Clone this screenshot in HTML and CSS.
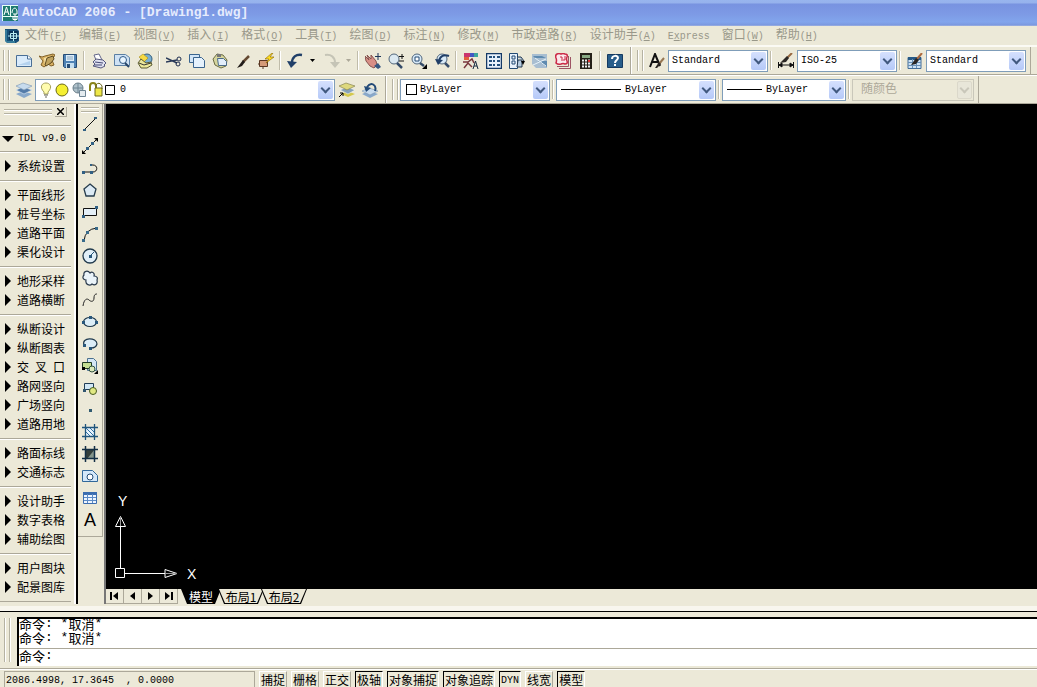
FILE: index.html
```
<!DOCTYPE html>
<html lang="zh-CN">
<head>
<meta charset="utf-8">
<title>AutoCAD 2006 - [Drawing1.dwg]</title>
<link rel="stylesheet" href="styles.css">
</head>
<body>
<div class="app">
<header class="title">
  <svg class="ico" viewBox="0 0 16 16"><path d="M0 0h16v16H0z" fill="#1d7a70"/><path d="M0 .5h16M8.500 0v11M0 11.500h16M.5 0v16" stroke="#e8fff8" fill="none"/><path d="M2 10l2.500-8L7 10M3 7h3M10 8c0-5 4-7 5-2v3h-4M11 11.500h4v3h-4zM13 9v7" stroke="#fff" fill="none"/></svg>
  <h1>AutoCAD 2006 - [Drawing1.dwg]</h1>
</header>
<nav class="menu">
  <svg class="ico" viewBox="0 0 16 16"><path d="M1 1h12l2 2v10l-3 2H3l-2-2z" fill="#174f78"/><path d="M5 3h9v9H5z" fill="#0b3557"/><path d="M9.500 3v10M4 8h11M6.500 5.500h6v5h-6z" stroke="#b9eef2" fill="none"/><path d="M2 2v12M3 14h8" stroke="#58a9bd"/></svg>
  <button>文件<i>(<u>F</u>)</i></button><button>编辑<i>(<u>E</u>)</i></button><button>视图<i>(<u>V</u>)</i></button><button>插入<i>(<u>I</u>)</i></button><button>格式<i>(<u>O</u>)</i></button><button>工具<i>(<u>T</u>)</i></button><button>绘图<i>(<u>D</u>)</i></button><button>标注<i>(<u>N</u>)</i></button><button>修改<i>(<u>M</u>)</i></button><button>市政道路<i>(<u>R</u>)</i></button><button>设计助手<i>(<u>A</u>)</i></button><button><i>E<u>x</u>press</i></button><button>窗口<i>(<u>W</u>)</i></button><button>帮助<i>(<u>H</u>)</i></button>
</nav>
<div class="row">
  <div class="bar">
    <span class="grip"></span>
    <button class="tool" aria-label="新建"><svg viewBox="0 0 16 16"><path d="M.5 2.500h11l4 3v8H.5z" fill="#d9ebfb" stroke="#4a6f96"/><path d="M11.500 2.500v3.500h4" fill="#fff" stroke="#4a6f96"/><path d="M2 12h12V8z" fill="#b4d2ee"/></svg></button>
    <button class="tool" aria-label="打开"><svg viewBox="0 0 16 16"><path d="M0 3l3 1 3-1 8-2 2 1-3 5 2 5-3 1-3-2-4 3-3-2 2-4z" fill="#d9b264" stroke="#806028"/><path d="M5 5l7-2-1 7-5 3z" fill="#f5e1a5"/><path d="M6 12l2-7 6-2 1 3-3 4-5 3z" fill="#c0a35e" stroke="#5e4a20"/></svg></button>
    <button class="tool" aria-label="保存"><svg viewBox="0 0 16 16"><path d="M1.500 1.500h13v13h-12l-1-1z" fill="#4f83b5" stroke="#264c75"/><path d="M4 2h8v6H4z" fill="#dcecf8"/><path d="M5 4h6M5 6h6" stroke="#8aa7bf"/><path d="M4 10h8v5H4z" fill="#c5dff0"/><path d="M5 11h3v4H5z" fill="#264c75"/></svg></button>
    <span class="sep"></span>
    <button class="tool" aria-label="打印"><svg viewBox="0 0 16 16"><path d="M5 7L3 2l5-1 3 6" fill="#fff" stroke="#64678a"/><path d="M2 9l3-3 7 1 3 3-2 2 1 1-4 2-8-2 2-2z" fill="#dfe1f0" stroke="#55587d"/><path d="M4 9l8 1M3 12h8" stroke="#454874"/></svg></button>
    <button class="tool" aria-label="打印预览"><svg viewBox="0 0 16 16"><path d="M.5 1.500h11l4 3v8H.5z" fill="#cfe2f4" stroke="#5b7fa3"/><circle cx="9" cy="7" r="3.500" fill="#e8f5ff" stroke="#315b88"/><path d="M11 10l4 4" stroke="#254468" stroke-width="2"/></svg></button>
    <button class="tool" aria-label="发布"><svg viewBox="0 0 16 16"><circle cx="10" cy="6" r="5" fill="#79aed0" stroke="#355f7e"/><path d="M2 4l4-3 5 4-4 4z" fill="#f7da43" stroke="#a28c22" stroke-width=".6"/><path d="M1 10l3-4 5 4 5-1 1 3-5 3-6 0z" fill="#ece89a" stroke="#5b5b34"/><path d="M2 10l5 2 7-2" stroke="#333" fill="none"/></svg></button>
    <span class="sep"></span>
    <button class="tool" aria-label="剪切"><svg viewBox="0 0 16 16"><path d="M0 5l11 5M0 9l11-2" stroke="#2a3a58" stroke-width="1.400"/><circle cx="13" cy="6" r="2" fill="none" stroke="#1d2c4e"/><circle cx="12" cy="11" r="2" fill="none" stroke="#1d2c4e"/></svg></button>
    <button class="tool" aria-label="复制"><svg viewBox="0 0 16 16"><path d="M.5 1.500h10v8H.5z" fill="#d2e5f7" stroke="#3a648e"/><path d="M4.500 4.500h8l3 3v7h-11z" fill="#e5f1fc" stroke="#3a648e"/></svg></button>
    <button class="tool" aria-label="粘贴"><svg viewBox="0 0 16 16"><path d="M1 6l4-5 6 1 4 5-1 6-5 2-6-3z" fill="#d6d59d" stroke="#6b6c44"/><path d="M5 1h4v3H5z" fill="#777"/><path d="M5.500 5.500h6l3 3v4h-8z" fill="#e2eefb" stroke="#4b6b88"/></svg></button>
    <button class="tool" aria-label="特性匹配"><svg viewBox="0 0 16 16"><path d="M14 3L8 9" stroke="#654a32" stroke-width="2.500"/><path d="M8 7l2 2-3 4-5 2z" fill="#221d1a"/></svg></button>
    <button class="tool" aria-label="块编辑器"><svg viewBox="0 0 16 16"><path d="M1.500 7.500h8v6h-8z" fill="#d49a78" stroke="#593622"/><path d="M14 0L7 6h4l-3 4 8-6h-4l3-4z" fill="#ffdf20" stroke="#876000" stroke-width=".6"/><path d="M5 13v3M0 11h2" stroke="#593622"/></svg></button>
    <span class="sep"></span>
    <button class="tool" aria-label="放弃"><svg viewBox="0 0 16 16"><path d="M15 2C9 1 5 4 5 10" fill="none" stroke="#203f68" stroke-width="2.500"/><path d="M0 8l10 1-6 6z" fill="#203f68"/></svg></button>
    <button class="mini" aria-label="放弃列表"><svg viewBox="0 0 6 4"><path d="M0 0h5L2.500 3z"/></svg></button>
    <button class="tool" aria-label="重做"><svg viewBox="0 0 16 16"><path d="M1 2c6-1 10 2 10 8" fill="none" stroke="#c5c4b6" stroke-width="2"/><path d="M6 9h10l-5 6z" fill="#c5c4b6"/></svg></button>
    <button class="mini pale" aria-label="重做列表"><svg viewBox="0 0 6 4"><path d="M0 0h5L2.500 3z"/></svg></button>
    <span class="sep"></span>
    <button class="tool" aria-label="平移"><svg viewBox="0 0 16 16"><path d="M0 3l4 4-2-5 4 4V2l5 6 1 4-3 3-4-2-4-5z" fill="#d88f86" stroke="#86544f"/><path d="M13 0v7M10 3.500h6" stroke="#1d3558"/><path d="M9 13l4-3 3 4-3 2z" fill="#365780"/></svg></button>
    <button class="tool" aria-label="实时缩放"><svg viewBox="0 0 16 16"><circle cx="6" cy="6" r="5" fill="#dce9f1" stroke="#52677c"/><path d="M9 10l5 5" stroke="#354c6a" stroke-width="2.500"/><path d="M14 1v5M11 3.500h5M11 8h5" stroke="#111"/></svg></button>
    <button class="tool" aria-label="窗口缩放"><svg viewBox="0 0 16 16"><circle cx="6" cy="6" r="5" fill="#d8eaf8" stroke="#52677c"/><path d="M4 4h4v4H4z" fill="#fff" stroke="#244a73"/><path d="M9 10l4 3" stroke="#354c6a" stroke-width="2.500"/><path d="M16 11v5h-5z"/></svg></button>
    <button class="tool" aria-label="缩放上一个"><svg viewBox="0 0 16 16"><circle cx="8" cy="6" r="5" fill="#d8eaf8" stroke="#52677c"/><path d="M15 3C10 1 6 3 5 8" fill="none" stroke="#203f68" stroke-width="2"/><path d="M1 6l8 1-5 5z" fill="#203f68"/><path d="M11 10l4 4" stroke="#354c6a" stroke-width="2.500"/></svg></button>
    <span class="sep"></span>
    <button class="tool" aria-label="特性"><svg viewBox="0 0 16 16"><path d="M1 0h6v4H1z" fill="#ca356f"/><path d="M7 0h4v4H7z" fill="#4357c4"/><path d="M11 0h4v4h-4z" fill="#3ba69c"/><path d="M1 4h5v3H1z" fill="#e35f3c"/><path d="M0 9h5l4-3 2 4M1 15l4-5 4 4" stroke="#78363c" stroke-width="1.500" fill="none"/><path d="M10 16l2.500-8L15 16M11 13h3" stroke="#14283e" fill="none"/></svg></button>
    <button class="tool" aria-label="设计中心"><svg viewBox="0 0 16 16"><path d="M.5 .5h15v15H.5z" fill="#e7f1fb" stroke="#153a66" stroke-width="1.500"/><path d="M3 4h3M3 8h3M3 12h3M7 4h2M7 8h2M7 12h2M11 4h3M11 8h3M11 12h3" stroke="#24507d" stroke-width="2"/></svg></button>
    <button class="tool" aria-label="工具选项板"><svg viewBox="0 0 16 16"><path d="M.5 .5h8v15h-8z" fill="#e7f1fb" stroke="#234a74"/><path d="M3 3h3v3H3zM3 8h3v3H3z" stroke="#234a74" fill="none"/><path d="M8 4h4l3 4M9 7h4v7H8z" fill="#b6cde2" stroke="#24384f"/><path d="M12 8h4l-2 4z"/></svg></button>
    <button class="tool" aria-label="图纸集"><svg viewBox="0 0 16 16"><path d="M0 1h15v14H4L0 11z" fill="#a8bed1"/><path d="M1 3h9l4 2H3zM6 8h9v6z" fill="#5f8bb0"/><path d="M1 12l13-6M3 5l11 8" stroke="#e8f3f9"/></svg></button>
    <button class="tool" aria-label="标记集"><svg viewBox="0 0 16 16"><path d="M15.500 4v11.500H4M13.500 3v10.500H2" fill="none" stroke="#9e5464"/><path d="M2 1q2-1 4 0 2-1 4 0 3 0 2 3-1 2 0 4 1 3-2 3-2-1-4 0-3 1-5-1 1-3 0-5-1-3 1-4z" fill="#fbe9ec" stroke="#cb2947" stroke-width="1.500"/><path d="M5 4h2v4M10 3v4H8" stroke="#cb2947" fill="none"/></svg></button>
    <button class="tool" aria-label="计算器"><svg viewBox="0 0 16 16"><path d="M2 0h12v16H2z" fill="#252018"/><path d="M4 2h8v3H4z" fill="#88a983"/><path d="M4 7.500h8M4 10.500h8M4 13.500h8" stroke="#eee" stroke-width="2" stroke-dasharray="2 1"/><path d="M10 7h2v2h-2z" fill="#d33"/></svg></button>
    <span class="sep"></span>
    <button class="tool" aria-label="帮助"><svg viewBox="0 0 16 16"><path d="M.5 1.500h15v13H.5z" fill="#285d8a" stroke="#153a61"/><path d="M5 6c0-4 6-4 6-1 0 2-3 2-3 5" fill="none" stroke="#fff" stroke-width="2"/><path d="M7 11h2v2H7z" fill="#fff"/></svg></button>
  </div>
  <div class="bar">
    <span class="grip"></span>
    <button class="tool" aria-label="文字样式"><svg viewBox="0 0 16 16"><path d="M1 14L6 1l5 12M3 9h6" fill="none" stroke="#111" stroke-width="2"/><path d="M15 5l-5 6" stroke="#967652" stroke-width="2"/><path d="M10 9l2 2-4 4-2 0z" fill="#292522"/></svg></button>
    <label class="combo w100"><select aria-label="文字样式"><option>Standard</option></select></label>
    <span class="sep"></span>
    <button class="tool" aria-label="标注样式"><svg viewBox="0 0 16 16"><path d="M.5 9v6M15.500 9v6M1 12h14M1 12l3-2v4zM15 12l-3-2v4z" stroke="#111"/><path d="M14 0L9 5" stroke="#986840" stroke-width="2"/><path d="M9 3l2 2-3 4-6 1z" fill="#2b2724"/></svg></button>
    <label class="combo w100"><select aria-label="标注样式"><option>ISO-25</option></select></label>
    <span class="sep"></span>
    <button class="tool" aria-label="表格样式"><svg viewBox="0 0 16 16"><path d="M1 4.500h13v11H1z" fill="#cce1f4" stroke="#426d98"/><path d="M1 5.500h13" stroke="#275986" stroke-width="3"/><path d="M1 9.500h13M1 12.500h13M5.500 6v9M9.500 6v9" stroke="#6890b7"/><path d="M15 0l-5 6" stroke="#ad6a40" stroke-width="2"/><path d="M9 5l3 2-3 4-5 1z" fill="#292522"/></svg></button>
    <label class="combo w100"><select aria-label="表格样式"><option>Standard</option></select></label>
  </div>
</div>
<div class="row second">
  <div class="bar">
    <span class="grip"></span>
    <button class="tool" aria-label="图层特性"><svg viewBox="0 0 16 16"><path d="M0 12l7-3 9 3-8 4z" fill="#89a9cb"/><path d="M0 8l7-3 9 3-8 4z" fill="#547ca9" stroke="#e3eef8" stroke-width=".6"/><path d="M0 4l7-3 9 3-8 4z" fill="#c7dbed" stroke="#7895b4" stroke-width=".6"/></svg></button>
    <label class="combo layers">
      <svg class="state" viewBox="0 0 76 16"><path d="M5 10C0 5 3 1 7 1s7 4 2 9v2H5z" fill="#fffcae" stroke="#a5a15b"/><path d="M5 13h4M6 15h2" stroke="#66665a"/><circle cx="23" cy="8" r="6" fill="#f5ef31" stroke="#6c6a14"/><circle cx="39" cy="6" r="5" fill="#afc1ca" stroke="#6a7e89"/><path d="M39 1v10M34 6h10M40.500 8.500h6v6h-6z" fill="#e4ebef" stroke="#6f8594"/><path d="M51 9V4q0-3 3-3t3 3v4" fill="none" stroke="#8b8419" stroke-width="2"/><path d="M56 6h7v8h-7z" fill="#eee747" stroke="#6d681e"/><path d="M57 6V3q3-4 6 1v3" fill="none" stroke="#6d681e"/><path d="M66.500 3.500h9v9h-9z" fill="#fff" stroke="#000"/></svg>
      <select aria-label="图层"><option>0</option></select>
    </label>
    <button class="tool" aria-label="将对象的图层置为当前"><svg viewBox="0 0 16 16"><path d="M2 12l6-3 8 3-7 3z" fill="#d4c94c"/><path d="M1 8l7-3 8 3-7 4z" fill="#86a2ba" stroke="#fff" stroke-width=".5"/><path d="M0 4l7-3 9 3-8 4z" fill="#ddd87d" stroke="#787746" stroke-width=".6"/><path d="M0 15l4-4M1 11h3v3" stroke="#000" fill="none"/></svg></button>
    <button class="tool" aria-label="上一个图层"><svg viewBox="0 0 16 16"><path d="M0 12l7-3 9 3-8 4z" fill="#89a9cb"/><path d="M0 9l7-3 9 3-8 4z" fill="#c8dcef" stroke="#7895b4" stroke-width=".6"/><path d="M13 9c2-6-4-10-8-4" fill="none" stroke="#234a77" stroke-width="2"/><path d="M2 4l7 2-5 4z" fill="#234a77"/></svg></button>
  </div>
  <div class="bar">
    <span class="grip"></span>
    <label class="combo w150"><span class="swatch"></span><select aria-label="颜色"><option>ByLayer</option></select></label>
    <span class="sep"></span>
    <label class="combo w160"><span class="line"></span><select aria-label="线型"><option>ByLayer</option></select></label>
    <span class="sep"></span>
    <label class="combo w124"><span class="line short"></span><select aria-label="线宽"><option>ByLayer</option></select></label>
    <span class="sep"></span>
    <label class="combo w120 off"><select aria-label="打印样式" disabled><option>随颜色</option></select></label>
  </div>
</div>
<main class="work">
  <aside class="side">
    <div class="side-top"><span class="hgrip"></span><button class="close" aria-label="关闭"><svg viewBox="0 0 7 7"><path d="M0 0l7 7M7 0L0 7" stroke="#000" stroke-width="1.500"/></svg></button></div>
    <div class="group head"><button class="open"><i>TDL v9.0</i></button></div>
    <div class="group"><button>系统设置</button></div>
    <div class="group"><button>平面线形</button><button>桩号坐标</button><button>道路平面</button><button>渠化设计</button></div>
    <div class="group"><button>地形采样</button><button>道路横断</button></div>
    <div class="group"><button>纵断设计</button><button>纵断图表</button><button class="spread"><span>交</span><span>叉</span><span>口</span></button><button>路网竖向</button><button>广场竖向</button><button>道路用地</button></div>
    <div class="group"><button>路面标线</button><button>交通标志</button></div>
    <div class="group"><button>设计助手</button><button>数字表格</button><button>辅助绘图</button></div>
    <div class="group"><button>用户图块</button><button>配景图库</button></div>
  </aside>
  <div class="dock">
    <div class="draw">
      <span class="hgrip"></span>
      <button aria-label="直线"><svg viewBox="0 0 16 16"><path d="M2 14L14 2" stroke="#111"/><path d="M1 13h3v2H1zM12 1h3v2h-3z" fill="#316084"/></svg></button>
      <button aria-label="构造线"><svg viewBox="0 0 16 16"><path d="M1 15L15 1" stroke="#111"/><path d="M0 16v-4l4 4zM16 0v4l-4-4z"/><path d="M4 9h3v3H4zM9 4h3v3H9z" fill="#316084"/></svg></button>
      <button aria-label="多段线"><svg viewBox="0 0 16 16"><path d="M2 12h9c5 0 5-7 0-7H8" fill="none" stroke="#111"/><path d="M0 11h3v3H0zM8 11h3v3H8zM8 4h2v2H8z" fill="#316084"/></svg></button>
      <button aria-label="正多边形"><svg viewBox="0 0 16 16"><path d="M8 2l6 5-2 7H4L2 7z" fill="#dceaf4" stroke="#263c4d" stroke-width="1.300"/></svg></button>
      <button aria-label="矩形"><svg viewBox="0 0 16 16"><path d="M1.500 4.500h13v7h-13z" fill="#e5f0f8" stroke="#111"/><path d="M0 11h3v3H0zM13 2h3v3h-3z" fill="#316084"/></svg></button>
      <button aria-label="圆弧"><svg viewBox="0 0 16 16"><path d="M2 15Q3 3 15 2" fill="none" stroke="#111"/><path d="M0 13h3v3H0zM4 5h3v3H4zM13 1h3v3h-3z" fill="#396b8b"/></svg></button>
      <button aria-label="圆"><svg viewBox="0 0 16 16"><circle cx="8" cy="8" r="7" fill="#e1eff8" stroke="#20394c" stroke-width="1.300"/><path d="M8 8l4-4" stroke="#27577b"/><path d="M7 7h3v3H7z" fill="#27577b"/></svg></button>
      <button aria-label="修订云线"><svg viewBox="0 0 16 16"><path d="M8 3C6 0 1 1 2 5c-2 2-1 5 2 5-1 5 4 6 6 4 3 2 6 0 5-4 1-2 0-4-3-4 1-3-2-5-4-3z" fill="#eaf3f9" stroke="#29394c" stroke-width="1.200"/></svg></button>
      <button aria-label="样条曲线"><svg viewBox="0 0 16 16"><path d="M1 14C2 7 5 6 7 8S12 10 12 6 14 2 15 2" fill="none" stroke="#222"/></svg></button>
      <button aria-label="椭圆"><svg viewBox="0 0 16 16"><ellipse cx="8" cy="8" rx="6.500" ry="4.500" fill="#dcedf7" stroke="#20394c" stroke-width="1.200"/><path d="M0 7h3v3H0zM13 7h3v3h-3zM7 2h3v3H7z" fill="#28577c"/></svg></button>
      <button aria-label="椭圆弧"><svg viewBox="0 0 16 16"><path d="M2 9C-1 1 15 1 15 8q-1 4-6 4" fill="#dcedf7" stroke="#20394c" stroke-width="1.200"/><path d="M1 8h3v3H1zM7 11h3v3H7z" fill="#28577c"/></svg></button>
      <button aria-label="插入块"><svg viewBox="0 0 16 16"><path d="M5.500 .5h6l3 3v9h-9z" fill="#d4e6f5" stroke="#4c718e"/><path d="M.5 4.500h9v6h-9z" fill="#c5df93" stroke="#203b25"/><circle cx="10" cy="11" r="3" fill="#dce9ba" stroke="#315140"/><path d="M0 9h3v3H0zM16 12v4h-4z"/></svg></button>
      <button aria-label="创建块"><svg viewBox="0 0 16 16"><path d="M2.500 3.500h9v6h-9z" fill="#d1e7f6" stroke="#213d57"/><circle cx="11" cy="11" r="3.500" fill="#e1e983" stroke="#485b21"/><path d="M1 9h3v3H1z" fill="#31566f"/></svg></button>
      <button aria-label="点"><svg viewBox="0 0 16 16"><path d="M7 7h3v3H7z" fill="#315b70"/></svg></button>
      <button aria-label="图案填充"><svg viewBox="0 0 16 16"><path d="M3 3h10v10H3z" fill="#e8f3fd"/><path d="M0 3.500h16M0 12.500h16M3.500 0v16M12.500 0v16" stroke="#20557c" stroke-width="1.300"/><path d="M4 4l8 8M4 8l4 4M8 4l4 4" stroke="#2f72a2"/></svg></button>
      <button aria-label="渐变色"><svg viewBox="0 0 16 16"><path d="M3 3h10v10H3z" fill="#343f3c"/><path d="M13 3v10H5z" fill="#84958b"/><path d="M0 3.500h16M0 12.500h16M3.500 0v16M12.500 0v16" stroke="#132f45" stroke-width="1.500"/></svg></button>
      <button aria-label="面域"><svg viewBox="0 0 16 16"><path d="M.5 2.500h10l5 5v6H.5z" fill="#d4e8fa" stroke="#31689a"/><circle cx="8" cy="9" r="3" fill="#fff" stroke="#254e77"/></svg></button>
      <button aria-label="表格"><svg viewBox="0 0 16 16"><path d="M1.500 2.500h13v11h-13z" fill="#eef5ff" stroke="#3c6daf"/><path d="M1 3.500h14" stroke="#3c6daf" stroke-width="3"/><path d="M2 7.500h12M2 10.500h12M5.500 4v9M10.500 4v9" stroke="#5d8bc6"/></svg></button>
      <button class="letter" aria-label="多行文字">A</button>
    </div>
  </div>
  <section class="view">
    <div class="canvas">
      <svg class="ucs" viewBox="0 0 100 100" role="img" aria-label="坐标系"><path d="M9.500 79.500h9v9h-9zM14.500 79V38M19 84.500h40M14.500 27.500l-5 10h10zM59 80.500v8l12-4z" fill="none" stroke="#fff"/><path d="M14.500 28v9M59 84.500h12" stroke="#999"/><text x="12" y="17">Y</text><text x="81" y="90">X</text></svg>
    </div>
    <div class="tabs">
      <button class="nav" aria-label="第一个"><svg viewBox="0 0 9 8"><path d="M0 0h2v8H0zM8 0v8L3 4z"/></svg></button>
      <button class="nav" aria-label="上一个"><svg viewBox="0 0 9 8"><path d="M7 0v8L2 4z"/></svg></button>
      <button class="nav" aria-label="下一个"><svg viewBox="0 0 9 8"><path d="M2 0v8l5-4z"/></svg></button>
      <button class="nav" aria-label="最后一个"><svg viewBox="0 0 9 8"><path d="M7 0h2v8H7zM1 0v8l5-4z"/></svg></button>
      <button class="tab active">模型</button><button class="tab">布局1</button><button class="tab">布局2</button>
    </div>
  </section>
</main>
<section class="command">
  <span class="grip"></span>
  <div class="console">
    <div class="log"><p>命令<i>: *</i>取消<i>*</i></p><p>命令<i>: *</i>取消<i>*</i></p></div>
    <label class="prompt">命令<i>:</i><input type="text" aria-label="命令"></label>
  </div>
</section>
<footer class="status">
  <output>2086.4998, 17.3645&nbsp; , 0.0000</output>
  <button>捕捉</button><button>栅格</button><button>正交</button><button class="on">极轴</button><button class="on">对象捕捉</button><button class="on">对象追踪</button><button class="on latin">DYN</button><button>线宽</button><button class="on">模型</button>
</footer>
</div>
</body>
</html>
```
FILE: styles.css
```
*, *::before, *::after { box-sizing: border-box; }
body {
  margin: 0;
  background: #ece9d8;
  color: #000;
  font: 12px/16px "Noto Sans CJK SC", sans-serif;
}
button, select, input { font: inherit; color: inherit; margin: 0; }
button { padding: 0; border: 0; background: none; white-space: nowrap; }
svg { display: block; flex: none; }
i, output {
  font-family: "Liberation Mono", monospace;
  font-size: 10px;
  font-style: normal;
}
.app { display: flex; flex-direction: column; min-height: 100vh; overflow: hidden; }

.title {
  display: flex;
  align-items: center;
  gap: 4px;
  height: 26px;
  padding-left: 2px;
  background: linear-gradient(#98b5ee 0, #96b2ec 3px, #7893e0 4px, #7d9ae5 14px, #82a5ec 22px, #7b98df 25px, #aab9de 26px);
}
.title h1 { margin: 0; color: #e6ecfd; font: bold 13px/18px "Liberation Mono", monospace; }
.ico { width: 16px; height: 16px; }
.menu {
  display: flex;
  align-items: center;
  gap: 12px;
  height: 21px;
  padding-left: 4px;
  border-bottom: 2px solid #fbfaf4;
  color: #99988a;
}
.menu .ico { margin-right: -7px; }

.row { display: flex; height: 28px; border-bottom: 1px solid #aca899; }
.second { height: 29px; border-top: 1px solid #fff; }
.bar { display: flex; align-items: center; padding-right: 4px; border-right: 1px solid #aca899; }
.bar + .bar { border-left: 1px solid #fff; padding-left: 3px; }
.grip {
  align-self: stretch;
  width: 6px;
  margin: 3px 3px;
  border: solid #b5b2a2;
  border-width: 0 1px;
  box-shadow: inset 1px 0 #fff, 1px 0 #fff;
}
.bar + .bar .grip { margin: 3px 2px; }
.tool { display: grid; place-items: center; width: 23px; height: 23px; }
.tool svg { width: 16px; height: 16px; }
.mini { display: grid; place-items: center; width: 14px; height: 23px; }
.mini svg { width: 6px; height: 4px; }
.pale { width: 12px; }
.pale svg { fill: #aca899; }
.sep { align-self: stretch; width: 6px; padding: 4px 2px; }
.sep::before { content: ""; display: block; width: 1px; height: 100%; background: #c0bcaa; box-shadow: 1px 0 #fff; }

.combo {
  position: relative;
  display: flex;
  align-items: center;
  height: 22px;
  padding-left: 3px;
  border: 1px solid #7f9db9;
  background: #fff;
}
.combo::after {
  content: "";
  position: absolute;
  inset: 1px 1px 1px auto;
  width: 15px;
  border-radius: 2px;
  background: linear-gradient(#d5e0fd, #b5c9f8);
  pointer-events: none;
}
.combo::before {
  content: "";
  position: absolute;
  z-index: 1;
  right: 5px;
  top: 5px;
  width: 7px;
  height: 7px;
  border: solid #41597f;
  border-width: 0 2px 2px 0;
  transform: rotate(45deg);
  pointer-events: none;
}
.combo select {
  flex: 1;
  min-width: 0;
  height: 100%;
  padding: 0;
  border: 0;
  outline: 0;
  background: none;
  appearance: none;
  font: 10px/16px "Liberation Mono", "Noto Sans CJK SC", monospace;
}
.w100 { width: 100px; }
.w120 { width: 122px; }
.w124 { width: 124px; }
.w150 { width: 150px; }
.w160 { width: 160px; }
.layers { width: 300px; }
.state { width: 76px; height: 16px; margin-right: 5px; }
.swatch { width: 11px; height: 11px; margin: 0 3px 0 2px; border: 1px solid #000; }
.line { width: 60px; height: 1px; margin: 0 4px 0 1px; background: #000; }
.short { width: 35px; }
.off { padding-left: 8px; border-color: #c9c7ba; background: #ece9d8; }
.off::after { background: #e8e6d9; border: 1px solid #dbd8ca; }
.off::before { border-color: #c9c7ba; }
.combo.off select { color: #aca899; font-size: 12px; opacity: 1; }

.work { display: flex; flex: 1; }
.side { width: 78px; padding: 0 5px 0 0; border-right: 2px solid #000; box-shadow: inset -2px 0 #fff; }
.side-top { display: flex; align-items: center; gap: 3px; height: 21px; padding: 0 4px 6px 4px; }
.hgrip {
  flex: 1;
  height: 5px;
  border: solid #b5b2a2;
  border-width: 1px 0;
  box-shadow: inset 0 1px #fff, 0 1px #fff;
}
.close { display: grid; place-items: center; width: 12px; height: 10px; border: solid #aca899; border-width: 0 1px 1px 0; }
.close svg { width: 7px; height: 7px; }
.group { padding: 4px 0 5px; border-top: 1px solid #aca899; box-shadow: inset 0 1px #fff; }
.head { padding: 3px 0; }
.group:last-child { border-bottom: 1px solid #aca899; }
.group button { display: flex; align-items: center; width: 100%; height: 19px; padding-left: 5px; }
.group button::before {
  content: "";
  margin-right: 6px;
  border: solid transparent;
  border-width: 6px 0 6px 6px;
  border-left-color: #000;
}
.group .open { padding-left: 2px; }
.group .open::before { margin-right: 4px; border: solid transparent; border-width: 6px 6px 0; border-top-color: #000; }
.group .spread { gap: 6px; }
.group .spread::before { margin-right: 0; }

.dock { width: 28px; border-right: 2px solid #777; }
.draw { display: flex; flex-direction: column; padding: 3px 0 5px; margin-right: 1px; border: solid #aca899; border-width: 0 1px 1px 0; }
.draw .hgrip { flex: none; margin: 0 3px 1px; }
.draw button { display: grid; place-items: center; height: 22px; }
.draw svg { width: 16px; height: 16px; }
.draw .letter { font: 18px/22px "Liberation Sans", sans-serif; }

.view { display: flex; flex: 1; flex-direction: column; min-width: 0; }
.canvas { display: flex; flex: 1; align-items: flex-end; background: #000; }
.ucs { width: 100px; height: 100px; }
.ucs text { fill: #fff; font: 14px "Liberation Sans", sans-serif; }
.tabs { display: flex; height: 15px; }
.nav { display: grid; place-items: center; width: 18px; border: solid #aca899; border-width: 0 1px 1px 0; }
.nav svg { width: 9px; height: 8px; }
.tab {
  position: relative;
  z-index: 0;
  width: 46px;
  margin-left: -3px;
  background: #000;
  line-height: 13px;
  clip-path: polygon(0 0, 100% 0, calc(100% - 6px) 100%, 6px 100%);
}
.tab::before {
  content: "";
  position: absolute;
  z-index: -1;
  inset: 0 1px 1px;
  background: #ece9d8;
  clip-path: polygon(0 0, 100% 0, calc(100% - 6px) 100%, 6px 100%);
}
.active { width: 40px; margin-left: 3px; color: #fff; }
.active::before { background: #000; }

.command { display: flex; height: 58px; margin-top: 7px; border-top: 1px solid #000; border-bottom: 1px solid #aca899; box-shadow: 0 -5px #f8f6ee; }
.command .grip { margin: 6px 4px; }
.console { flex: 1; margin: 5px 0 2px 3px; border: solid #000; border-width: 2px 0 0 2px; background: #fff; font-size: 13px; }
.console i { font-size: 13px; white-space: pre; }
.log { height: 30px; border-bottom: 1px solid #aca899; line-height: 10px; }
.log p { display: flex; align-items: flex-start; height: 14px; margin: 0; }
.prompt { display: flex; align-items: flex-start; height: 17px; line-height: 14px; }
.prompt input { flex: 1; height: 14px; border: 0; outline: 0; padding: 0; background: none; }

.status { display: flex; gap: 4px; height: 18px; padding: 1px 0 0 4px; border-top: 1px solid #fff; }
.status output { width: 251px; padding-left: 1px; border: solid #aca899; border-width: 1px 1px 0; line-height: 18px; }
.status button { padding: 0 1px; border: solid #fff; border-width: 1px 1px 0; border-right-color: #aca899; line-height: 15px; }
.status .on { border-color: #000 #fff #000 #000; }
.status .latin { font: 10px/18px "Liberation Mono", monospace; }
```
